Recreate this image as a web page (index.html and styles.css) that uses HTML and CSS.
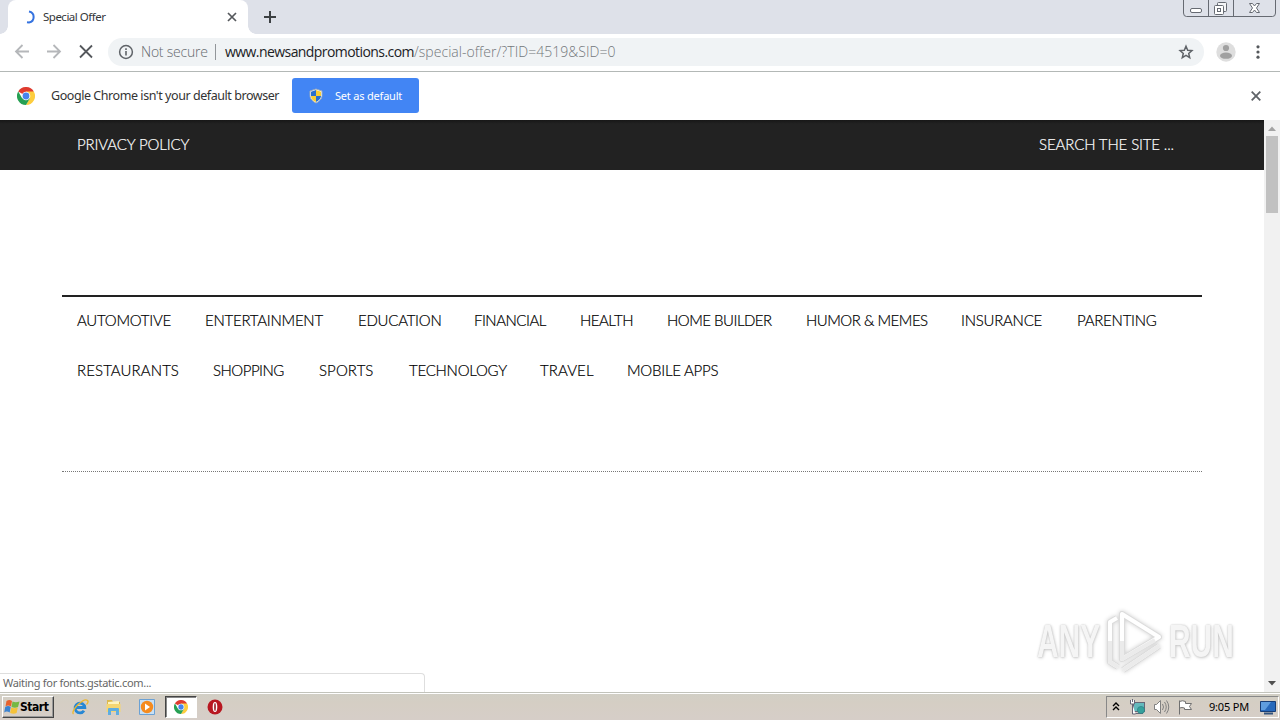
FILE: index.html
```html
<!DOCTYPE html>
<html lang="en">
<head>
<meta charset="utf-8">
<title>Special Offer</title>
<link rel="stylesheet" href="styles.css">
</head>
<body>
<div class="screen">
  <header class="tabstrip">
    <div class="tab">
      <svg class="spinner" width="14" height="14" viewBox="0 0 14 14"><path d="M7 1.400a5.700 5.700 0 0 1 0 11.200l-2-.3" fill="none" stroke="#3573e0" stroke-width="2"/></svg>
      <span class="tab-title">Special Offer</span>
      <svg class="tab-close" width="10" height="10" viewBox="0 0 10 10"><path d="M1 1l8 8M9 1l-8 8" stroke="#55585c" stroke-width="1.7"/></svg>
    </div>
    <svg class="newtab" width="14" height="14" viewBox="0 0 14 14"><path d="M7 1v12M1 7h12" stroke="#3c4043" stroke-width="2"/></svg>
    <div class="window-buttons">
      <svg width="94" height="18" viewBox="0 0 94 18" fill="none" stroke="#666a72"><path d="M.5 0v13q0 3.500 3 3.500h86q3 0 3-3.500V0M25.500 0v16M50.500 0v16"/><rect x="7.500" y="8.500" width="11" height="4" rx="1.500" fill="#fff"/><rect x="34.500" y="2.500" width="9" height="9" rx="1" fill="#f4f5f7"/><rect x="31.500" y="5.500" width="9" height="9" rx="1" fill="#fff"/><rect x="34.500" y="8.500" width="3" height="3"/><path d="M66.500 3.500h3l2 2.500 2-2.500h3l-3 4.500 3 4.500h-3l-2-2.500-2 2.500h-3l3-4.500z" fill="#fff"/></svg>
    </div>
  </header>

  <div class="toolbar">
    <svg class="nav-icons" width="108" height="38" viewBox="0 0 108 38" fill="none" stroke-width="1.800"><g stroke="#b5b7ba"><path d="M29 18.500H16M22.500 12L16 18.500l6.500 6.500M47 18.500h13M53.500 12L60 18.500l-6.500 6.500"/></g><path d="M80 12.500l12 12M92 12.500L80 24.500" stroke="#55585c"/></svg>
    <div class="omnibox">
      <svg class="info" width="16" height="16" viewBox="0 0 16 16"><circle cx="8" cy="8" r="6.400" fill="none" stroke="#5f6368" stroke-width="1.500"/><path d="M8 7v4.500M8 4.300v1.600" stroke="#5f6368" stroke-width="1.600"/></svg>
      <span class="insecure">Not secure</span>
      <span class="divider"></span>
      <span class="url-host">www.newsandpromotions.com</span><span class="url-path">/special-offer/?TID=4519&amp;SID=0</span>
      <svg class="star" width="16" height="16" viewBox="0 0 16 16"><path d="M8 2.200l1.700 4 4.200.4-3.200 2.800 1 4.200L8 11.400l-3.700 2.200 1-4.200-3.200-2.800 4.200-.4z" fill="none" stroke="#5f6368" stroke-width="1.500"/></svg>
    </div>
    <svg class="avatar" width="20" height="20" viewBox="0 0 20 20"><circle cx="10" cy="10" r="9.700" fill="#dedede"/><circle cx="10" cy="6" r="3.100" fill="#a0a0a0"/><ellipse cx="10" cy="13.700" rx="6" ry="3.100" fill="#a0a0a0"/></svg>
    <svg class="menu" width="4" height="16" viewBox="0 0 4 16" fill="#55585c"><circle cx="2" cy="2.800" r="1.600"/><circle cx="2" cy="8" r="1.600"/><circle cx="2" cy="13.200" r="1.600"/></svg>
  </div>

  <div class="infobar">
    <svg class="chrome-logo" width="18" height="18" viewBox="0 0 18 18"><path d="M9 9L1.200 4.500A9 9 0 0 1 16.800 4.500z" fill="#df3b2f"/><path d="M9 9V4.500h7.800A9 9 0 0 1 9 18l4-7z" fill="#fdcd3e"/><path d="M9 9l4 2.200L9 18A9 9 0 0 1 1.200 4.500L5 11z" fill="#26a053"/><circle cx="9" cy="9" r="4.300" fill="#fff"/><circle cx="9" cy="9" r="3.400" fill="#4684ed"/></svg>
    <span class="infobar-text">Google Chrome isn't your default browser</span>
    <div class="default-btn">
      <svg width="16" height="16" viewBox="0 0 16 16"><path d="M8 1l6 2v4.500c0 3.500-3 6-6 7.500-3-1.500-6-4-6-7.500V3z" fill="#fff" stroke="#9aaabd"/><path d="M8 2v6H3V3.700zM8 8h5c0 3-3 5-5 6z" fill="#286fce"/><path d="M8 2l5 1.700V8H8zM3 8h5v6C5 13 3 11 3 8z" fill="#f7cd35"/></svg>
      <span>Set as default</span>
    </div>
    <svg class="infobar-close" width="10" height="10" viewBox="0 0 10 10"><path d="M.7.7l8.600 8.600M9.300.7L.7 9.300" stroke="#5f6368" stroke-width="1.800"/></svg>
  </div>

  <main class="viewport">
    <div class="page">
      <div class="topbar"><span class="privacy">PRIVACY POLICY</span><span class="search">SEARCH THE SITE ...</span></div>
      <nav class="site-nav">
        <div class="nav-row">
          <a class="w94">AUTOMOTIVE</a><a class="w119">ENTERTAINMENT</a><a class="w82">EDUCATION</a><a class="w72 tight">FINANCIAL</a><a class="w53 tight">HEALTH</a><a class="w105 tight">HOME BUILDER</a><a class="w121 tight">HUMOR &amp; MEMES</a><a class="w82">INSURANCE</a><a class="w79">PARENTING</a>
        </div>
        <div class="nav-row">
          <a class="w102 loose">RESTAURANTS</a><a class="w72 tight">SHOPPING</a><a class="w56 loose">SPORTS</a><a class="w97">TECHNOLOGY</a><a class="w53 loose">TRAVEL</a><a class="w92">MOBILE APPS</a>
        </div>
      </nav>
      <div class="dotted"></div>
      <div class="watermark">
        <span class="wm-any">ANY</span>
        <svg width="60" height="66" viewBox="0 0 60 66" fill="none" stroke-linejoin="round"><g stroke="#dcdcdc" stroke-width="6"><path d="M17 6v45l37-22zM12 10l-7 4v40l8 5M18 62l36-24"/></g><g stroke="#fff" stroke-width="4"><path d="M17 6v45l37-22zM12 10l-7 4v40l8 5M18 62l36-24"/></g><path d="M17 33v18l33-19M5 33v21l8 5M18 62l36-24" stroke="#ebebeb" stroke-width="4"/></svg>
        <span class="wm-run">RUN</span>
      </div>
      <div class="status">Waiting for fonts.gstatic.com...</div>
    </div>
    <div class="scrollbar">
      <svg width="16" height="16" viewBox="0 0 16 16"><path d="M4 11l4-4.500 4 4.500z" fill="#a3a3a3"/></svg>
      <div class="thumb"></div>
      <svg class="down" width="16" height="16" viewBox="0 0 16 16"><path d="M4 5l4 4.500L12 5z" fill="#505050"/></svg>
    </div>
  </main>

  <footer class="taskbar">
    <div class="start">
      <svg width="16" height="16" viewBox="0 0 16 16"><path d="M2.500 2q3-2 5.500 0L7 7.500q-3-1.800-5.500 0z" fill="#e8622d"/><path d="M8.500 2.500q3 1.500 7 0l-1.500 5.500q-3 1.500-6.500 0z" fill="#75b843"/><path d="M1.200 8q3-1.800 5.500 0l-1 5.500q-3-1.800-5.500 0z" fill="#3c83d0"/><path d="M7.300 8.500q3 1.500 6.500 0l-1.200 5.500q-3 1.500-6.500 0z" fill="#f5c23a"/></svg>
      <span>Start</span>
    </div>
    <div class="launch ie"><svg width="18" height="18" viewBox="0 0 18 18" fill="none"><path d="M4.500 9.500h9.300A4.900 4.900 0 1 0 13 12.700" stroke="#2787d4" stroke-width="2.800"/><path d="M2.500 16C-1 13 13-1 16.500 2.500c1 1 0 3-1 4" stroke="#edb72d" stroke-width="1.300"/></svg></div>
    <div class="launch folder"><svg width="18" height="18" viewBox="0 0 18 18"><path d="M2 2h5l1 2h7v9H2z" fill="#dcb94e"/><path d="M3 4l11-1v8H3z" fill="#fff4bd"/><path d="M1.500 6h14v8h-14z" fill="#f5d672"/><path d="M3 17v-6q0-1 1-1h9q1 0 1 1v6h-3v-4H6v4z" fill="#5fade0"/></svg></div>
    <div class="launch media"><svg width="18" height="18" viewBox="0 0 18 18"><path d="M1.500 1.500h15v15h-15z" fill="#c8e0f5" stroke="#6ba1d4"/><circle cx="9" cy="9" r="6.200" fill="#f58b1f"/><path d="M7 5.500l5 3.500-5 3.500z" fill="#fff"/></svg></div>
    <div class="task-chrome"><svg width="14" height="14" viewBox="0 0 18 18"><path d="M9 9L1.200 4.500A9 9 0 0 1 16.800 4.500z" fill="#df3b2f"/><path d="M9 9V4.500h7.800A9 9 0 0 1 9 18l4-7z" fill="#fdcd3e"/><path d="M9 9l4 2.200L9 18A9 9 0 0 1 1.200 4.500L5 11z" fill="#26a053"/><circle cx="9" cy="9" r="4.300" fill="#fff"/><circle cx="9" cy="9" r="3.400" fill="#4684ed"/></svg></div>
    <div class="launch opera"><svg width="16" height="16" viewBox="0 0 16 16"><circle cx="8" cy="8" r="7.500" fill="#b81720"/><ellipse cx="8" cy="8" rx="2.300" ry="5" fill="#fff"/><ellipse cx="8" cy="8" rx=".8" ry="4" fill="#8f1018"/></svg></div>
    <div class="tray">
      <svg class="chev" width="8" height="10" viewBox="0 0 8 10" fill="none" stroke="#000" stroke-width="1.400"><path d="M1 4l3-3 3 3M1 8l3-3 3 3"/></svg>
      <svg class="net" width="17" height="16" viewBox="0 0 17 16"><rect x="4.500" y="3.500" width="11" height="9" fill="#64b9bd" stroke="#667"/><path d="M5 14.500h9" stroke="#667"/><circle cx="12" cy="11" r="3.600" fill="#36a19c" stroke="#267a80" stroke-width=".6"/><path d="M1.500 1v4h4V1M3.500 0v3M3.500 5v10h3" stroke="#667" stroke-width="1" fill="#fff"/></svg>
      <svg class="sound" width="17" height="16" viewBox="0 0 17 16" fill="none" stroke="#808080"><path d="M1.500 5.500h2l4-4v13l-4-4h-2z" fill="#fff"/><path d="M9.500 5q2 3 0 6M11.500 3q3.500 5 0 10M13.500 1.500q4.500 6.500 0 13"/></svg>
      <svg class="flag" width="17" height="16" viewBox="0 0 17 16" fill="#fff" stroke="#707070"><path d="M2.500 15.500V1.500M2.500 2.500q3-1.500 6 0v2h6l-2 3 2 3h-7v-1.500q-2.500-1-5 0z"/></svg>
      <span class="clock">9:05 PM</span>
      <svg class="desktop" width="17" height="15" viewBox="0 0 17 15"><path d="M.5 1.500h15v10H.5z" fill="#2869bb" stroke="#173d76"/><path d="M1 2h10l-6 8H1z" fill="#5f9ddf"/><path d="M4 13.500h9" stroke="#33537c" stroke-width="2"/></svg>
    </div>
  </footer>
</div>
</body>
</html>
```
FILE: styles.css
```css
* { box-sizing: border-box; }
body { margin: 0; overflow: hidden; background: #fff; }
svg { display: block; flex: none; }
.screen { width: 1280px; height: 720px; display: flex; flex-direction: column; font-family: "Noto Sans", sans-serif; white-space: nowrap; }
.tabstrip { height: 34px; background: #dee1e9; display: flex; padding-left: 8px; flex: none; }
.tab { position: relative; width: 240px; height: 34px; background: #fff; border-radius: 8px 8px 0 0; display: flex; align-items: center; padding-left: 14px; }
.tab::before, .tab::after { content: ""; position: absolute; bottom: 0; width: 8px; height: 8px; }
.tab::before { left: -8px; background: radial-gradient(circle at 0 0, transparent 7.5px, #fff 8px); }
.tab::after { right: -8px; background: radial-gradient(circle at 100% 0, transparent 7.5px, #fff 8px); }
.tab-title { font-size: 11.5px; line-height: 16px; color: #34373a; margin-left: 7px; width: 184px; letter-spacing: -.5px; }
.newtab { margin: 10px 0 0 15px; }
.window-buttons { margin-left: auto; margin-right: 3px; }
.toolbar { height: 38px; border-bottom: 1px solid #b3b8b6; display: flex; align-items: center; padding-bottom: 1px; flex: none; }
.omnibox { width: 1096px; height: 28px; border-radius: 14px; background: #f0f3f5; display: flex; align-items: center; padding-left: 10px; font-size: 14px; line-height: 19px; font-family: "Open Sans", sans-serif; }
.omnibox span:not(.divider) { padding-bottom: 1px; }
.insecure { width: 67px; margin-left: 7px; color: #65696e; font-weight: 300; letter-spacing: -.22px; }
.divider { width: 1px; height: 16px; background: #92969a; margin: 0 9px 0 7px; }
.url-host { color: #202124; width: 189px; letter-spacing: -.57px; }
.url-path { color: #73777b; font-weight: 300; letter-spacing: .04px; }
.star { margin-left: auto; margin-right: 10px; }
.avatar { margin-left: 12px; }
.menu { margin-left: 20px; }
.infobar { height: 48px; display: flex; align-items: center; padding-left: 17px; flex: none; }
.infobar-text { margin-left: 16px; width: 241px; font-size: 12.5px; line-height: 17px; padding-bottom: 1px; color: #333; letter-spacing: -.44px; }
.default-btn { width: 127px; height: 35px; margin-bottom: 1px; border-radius: 3px; background: #4285f4; color: #fff; display: flex; align-items: center; padding-left: 16px; gap: 11px; font-size: 11px; letter-spacing: -.2px; }
.infobar-close { margin-left: auto; margin-right: 19px; }
.viewport { height: 572px; display: flex; flex: none; }
.page { position: relative; width: 1264px; height: 572px; font-family: Lato, sans-serif; }
.topbar { height: 50px; background: linear-gradient(#171717, #222 4px); color: #fff; display: flex; align-items: center; justify-content: space-between; padding: 0 90px 2px 77px; font-size: 15px; font-weight: 300; letter-spacing: -.13px; -webkit-text-stroke: .2px #fff; }
.site-nav { margin: 125px 62px 0; border-top: 2px solid #222; padding-left: 15px; height: 102px; font-size: 15px; font-weight: 300; color: #000; -webkit-text-stroke: .2px #000; letter-spacing: -.25px; }
.nav-row { display: flex; gap: 34px; height: 50px; line-height: 46px; }
.tight { letter-spacing: -.5px; }
.loose { letter-spacing: .1px; }
.w53 { width: 53px; } .w56 { width: 56px; } .w72 { width: 72px; } .w79 { width: 79px; } .w82 { width: 82px; }
.w92 { width: 92px; } .w94 { width: 94px; } .w97 { width: 97px; } .w102 { width: 102px; } .w105 { width: 105px; }
.w119 { width: 119px; } .w121 { width: 121px; }
.dotted { margin: 74px 62px 0; border-top: 1px dotted #777; }
.status { position: absolute; left: -1px; bottom: 0; width: 426px; height: 19px; border: 1px solid #dedede; border-bottom: 0; border-radius: 0 4px 0 0; background: #fff; padding-left: 3px; font: 11px/18px "Noto Sans", sans-serif; letter-spacing: -.3px; color: #666; }
.watermark { position: absolute; left: 1037px; top: 487px; width: 200px; height: 68px; display: flex; align-items: center; font: 700 46px/60px "Liberation Sans", sans-serif; color: #f5f5f5; text-shadow: 0 0 2px #bbb, 1px 1px 4px #ccc; }
.wm-any, .wm-run { width: 68px; flex: none; transform: scaleX(.65); transform-origin: left; }
.wm-run { margin-left: 4px; }
.watermark svg { filter: drop-shadow(0 0 2px #ccc); }
.scrollbar { width: 16px; background: #f1f1f1; display: flex; flex-direction: column; }
.thumb { width: 12px; height: 77px; background: #c1c1c1; margin-left: 2px; }
.down { margin-top: auto; }
.taskbar { height: 28px; background: linear-gradient(#d1cfc5, #d5cec4 10px, #d6cec8); border-top: 1px solid #c2c3bb; display: flex; align-items: center; flex: none; box-shadow: inset 0 1px #fff; padding: 1px 0 0 2px; }
.start { width: 52px; height: 22px; border: 1px solid; border-color: #fff #444 #444 #fff; box-shadow: inset -1px -1px #999; display: flex; align-items: center; padding-left: 1px; font: 700 12px "DejaVu Sans Condensed", "DejaVu Sans", sans-serif; color: #000; }
.start span { letter-spacing: -.45px; }
.ie { margin-left: 17px; }
.folder { margin-left: 16px; }
.media { margin-left: 15px; }
.task-chrome { width: 32px; height: 22px; margin-left: 9px; border: 1px solid; border-color: #444 #fff #fff #444; box-shadow: inset 1px 1px #888; background: #fff; display: flex; align-items: center; justify-content: center; }
.opera { margin-left: 10px; }
.tray { margin-left: auto; margin-right: 1px; width: 173px; height: 22px; border: 1px solid; border-color: #888 #fff #fff #888; display: flex; align-items: center; padding-left: 5px; }
.net { margin-left: 9px; }
.sound { margin-left: 7px; }
.flag { margin-left: 7px; }
.clock { margin-left: 15px; width: 51px; padding-bottom: 1px; font: 11px "Noto Sans", sans-serif; letter-spacing: -.2px; color: #000; }
```
